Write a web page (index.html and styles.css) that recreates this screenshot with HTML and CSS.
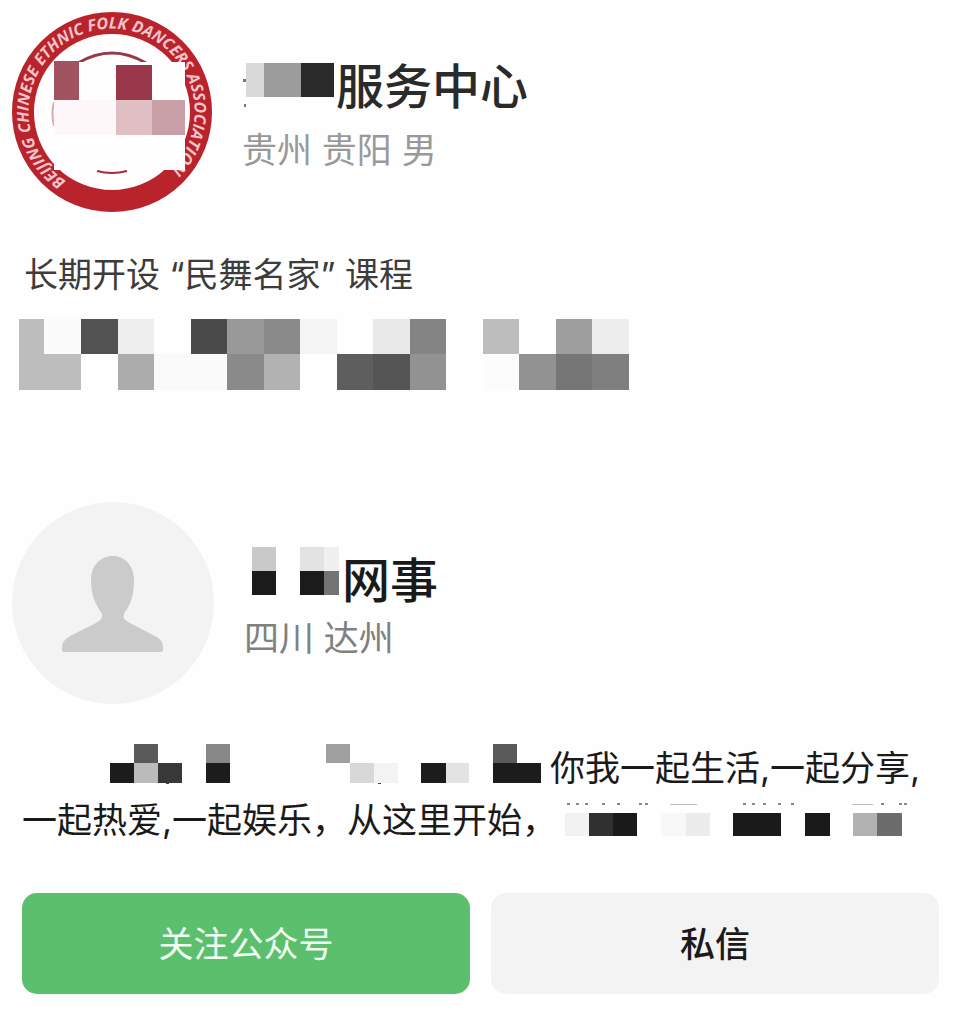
FILE: index.html
```html
<!DOCTYPE html>
<html lang="zh-CN">
<head>
    <meta charset="UTF-8">
    <meta name="viewport" content="width=device-width, initial-scale=1.0">
    <title>服务中心</title>
    <link rel="stylesheet" href="styles.css">
</head>
<body>
    <section class="profile">
        <div class="profile-head">
            <svg class="avatar" width="200" height="200" viewBox="0 0 200 200">
                <circle cx="100" cy="100" r="89" fill="#fffdfd" stroke="#b9232b" stroke-width="22"/>
                <path d="M66 51q34-20 68 0" fill="none" stroke="#963a48" stroke-width="3"/>
                <path d="M42 90q-3 12 0 24" fill="none" stroke="#d9aab2" stroke-width="2"/>
                <path id="ring" d="M54 169 A83 83 0 1 1 142 171" fill="none"/>
                <text class="seal-text"><textPath href="#ring">BEIJING CHINESE ETHNIC FOLK DANCERS ASSOCIATION</textPath></text>
                <path d="M42 50h131v108H42z" fill="#fffdfd"/>
                <path d="M42 49h25v39H42z" fill="#a1545f"/>
                <path d="M104 53h36v35h-36z" fill="#9a374a"/>
                <path d="M104 88h36v35h-36z" fill="#dfbfc4"/>
                <path d="M140 88h33v35h-33z" fill="#c9a0a8"/>
                <path d="M42 88h62v35H42z" fill="#fdf7f9"/>
                <path d="M85 159q15 4 30 0" fill="none" stroke="#a52c38" stroke-width="2"/>
            </svg>
            <div class="info">
                <h2 class="name">
                    <svg class="mosaic" width="94" height="52" viewBox="0 0 94 52">
                        <path d="M4 2h18v34H4z" fill="#d9d9db"/>
                        <path d="M22 2h37v34H22z" fill="#9c9c9c"/>
                        <path d="M59 2h33v34H59z" fill="#2a2a2a"/>
                        <path d="M1 18h3v3H1zM2 43h2v3H2z" fill="#777"/>
                    </svg>
                    <span>服务中心</span>
                </h2>
                <p class="place soft">贵州 贵阳 男</p>
            </div>
        </div>
        <p class="bio faded">长期开设 “民舞名家” 课程</p>
        <svg class="mosaic-block" width="612" height="71" viewBox="0 0 612 71">
            <path d="M0 0h25v35H0zM0 35h62v36H0z" fill="#bdbdbd"/>
            <path d="M25 0h37v35H25z" fill="#fbfbfb"/>
            <path d="M62 0h37v35H62z" fill="#525252"/>
            <path d="M99 0h36v35H99z" fill="#eee"/>
            <path d="M99 35h36v36H99z" fill="#acacac"/>
            <path d="M135 35h73v36h-73z" fill="#fafafa"/>
            <path d="M172 0h36v35h-36z" fill="#4b4b4b"/>
            <path d="M208 0h37v35h-37z" fill="#999"/>
            <path d="M245 0h36v35h-36zM208 35h37v36h-37z" fill="#8a8a8a"/>
            <path d="M245 35h36v36h-36z" fill="#b2b2b2"/>
            <path d="M281 0h37v35h-37z" fill="#f5f5f5"/>
            <path d="M354 0h37v35h-37z" fill="#e9e9e9"/>
            <path d="M391 0h36v35h-36z" fill="#848484"/>
            <path d="M318 35h36v36h-36z" fill="#5e5e5e"/>
            <path d="M354 35h37v36h-37z" fill="#555"/>
            <path d="M391 35h36v36h-36zM500 35h37v36h-37z" fill="#929292"/>
            <path d="M464 0h36v35h-36z" fill="#bdbdbd"/>
            <path d="M464 35h36v36h-36z" fill="#fcfcfc"/>
            <path d="M537 0h36v35h-36z" fill="#9e9e9e"/>
            <path d="M573 0h37v35h-37z" fill="#ededed"/>
            <path d="M537 35h36v36h-36z" fill="#767676"/>
            <path d="M573 35h37v36h-37z" fill="#7f7f7f"/>
        </svg>
    </section>

    <section class="profile">
        <div class="profile-head">
            <svg class="avatar" width="202" height="202" viewBox="0 0 202 202">
                <circle cx="101" cy="101" r="101" fill="#f3f3f3"/>
                <path d="M101 54c-13 0-22 10-22 24 0 14 4 24 10 32 3 5 0 8-5 11l-24 12c-7 4-10 7-10 12v3q0 2 3 2h95q3 0 3-2v-3c0-5-3-9-10-12l-23-12c-6-3-8-6-5-11 6-8 9-18 9-32 0-14-9-24-21-24z" fill="#cbcbcb"/>
            </svg>
            <div class="info">
                <h2 class="name dark">
                    <svg class="mosaic" width="98" height="68" viewBox="0 0 98 68">
                        <path d="M8 0h24v24H8z" fill="#c9c9c9"/>
                        <path d="M8 24h24v24H8z" fill="#1b1b1b"/>
                        <path d="M56 0h24v24H56z" fill="#e3e3e3"/>
                        <path d="M80 0h15v24H80z" fill="#f0f0f0"/>
                        <path d="M56 24h24v24H56z" fill="#1b1b1b"/>
                        <path d="M80 24h15v24H80z" fill="#747474"/>
                    </svg>
                    <span>网事</span>
                </h2>
                <p class="place">四川 达州</p>
            </div>
        </div>
        <div class="bio large">
            <p class="line">
                <svg class="mosaic" width="528" height="52" viewBox="0 0 528 52">
                    <path d="M88 21h24v20H88zM184 21h24v20h-24zM399 21h25v20h-25zM471 21h48v20h-48z" fill="#1c1c1c"/>
                    <path d="M112 2h24v19h-24zM471 2h24v19h-24z" fill="#5a5a5a"/>
                    <path d="M112 21h24v20h-24z" fill="#bbb"/>
                    <path d="M136 21h24v20h-24z" fill="#383838"/>
                    <path d="M184 2h24v19h-24z" fill="#888"/>
                    <path d="M304 2h24v19h-24z" fill="#9f9f9f"/>
                    <path d="M328 21h24v20h-24z" fill="#d8d8d8"/>
                    <path d="M352 21h24v20h-24z" fill="#f3f3f3"/>
                    <path d="M424 21h23v20h-23z" fill="#e3e3e3"/>
                    <path d="M144 41h3v1h-3zM356 41h3v1h-3z" fill="#444"/>
                </svg>
                <span>你我一起生活,一起分享,</span>
            </p>
            <p class="line">
                <span>一起热爱,一起娱乐，从这里开始，</span>
                <!-- tops of the covered words show above the blocks -->
                <svg class="mosaic" width="350" height="52" viewBox="0 0 350 52">
                    <path d="M8 19h24v23H8z" fill="#f2f2f2"/>
                    <path d="M32 19h24v23H32z" fill="#303030"/>
                    <path d="M56 19h24v23H56zM176 19h48v23h-48zM248 19h25v23h-25z" fill="#1a1a1a"/>
                    <path d="M104 19h25v23h-25z" fill="#f8f8f8"/>
                    <path d="M129 19h24v23h-24z" fill="#ececec"/>
                    <path d="M296 19h24v23h-24z" fill="#b1b1b1"/>
                    <path d="M320 19h25v23h-25z" fill="#6c6c6c"/>
                    <path d="M10 9h3v2h-3zM19 9h3v2h-3zM28 9h3v2h-3zM45 9h3v2h-3zM60 9h3v2h-3zM82 9h3v2h-3zM88 9h3v2h-3zM186 9h3v2h-3zM195 9h3v2h-3zM206 9h3v2h-3zM221 9h3v2h-3zM234 9h3v2h-3zM324 9h3v2h-3zM342 9h3v2h-3zM347 9h3v2h-3z" fill="#888"/>
                    <path d="M113 10h27v1h-27zM295 10h21v1h-21z" fill="#bbb"/>
                </svg>
            </p>
        </div>
        <div class="actions">
            <button type="button" class="btn follow">关注公众号</button>
            <button type="button" class="btn message">私信</button>
        </div>
    </section>
</body>
</html>
```
FILE: styles.css
```css
body {
    margin: 0;
    background: #fefefe;
    color: #1a1a1a;
    font-family: Inter, "Noto Sans CJK SC", sans-serif;
}
h2, p {
    margin: 0;
}
svg {
    display: block;
    flex-shrink: 0;
    overflow: visible;
}
.profile {
    padding: 12px 27px 0 22px;
}
.profile + .profile {
    padding-top: 112px;
    padding-bottom: 30px;
}
.profile-head {
    display: flex;
    align-items: center;
    gap: 30px;
    margin-left: -10px;
}
.info {
    padding-top: 6px;
}
.name {
    display: flex;
    align-items: center;
    height: 64px;
    font-family: "Noto Sans CJK SC", sans-serif;
    font-size: 48px;
    font-weight: 500;
    line-height: 64px;
    color: #2a2a2a;
}
.name span {
    padding-bottom: 8px;
}
.name.dark {
    color: #1a1a1a;
}
.place {
    font-size: 35px;
    line-height: 50px;
    color: #808080;
}
.place.soft {
    margin-top: 6px;
    color: #999;
}
.seal-text {
    font-family: "Open Sans", sans-serif;
    font-size: 16px;
    font-style: italic;
    font-weight: 700;
    fill: #f0c4c8;
}
.bio {
    margin-top: 37px;
    font-size: 34px;
    line-height: 52px;
}
.bio.faded {
    padding-left: 2px;
    color: #3c3c3c;
}
.bio.large {
    margin-top: 38px;
    font-size: 35px;
}
.mosaic-block {
    margin: 18px 0 0 -3px;
}
.line {
    display: flex;
    white-space: nowrap;
}
.actions {
    display: flex;
    gap: 21px;
    margin-top: 47px;
}
.btn {
    flex: 1;
    height: 101px;
    padding-bottom: 6px;
    border: none;
    border-radius: 15px;
    font-family: "Noto Sans CJK SC", sans-serif;
    font-size: 35px;
    cursor: pointer;
}
.btn.follow {
    background: #5bbf6d;
    color: #f0fff2;
}
.btn.message {
    background: #f3f3f3;
    color: #1a1a1a;
    font-weight: 500;
}
```
